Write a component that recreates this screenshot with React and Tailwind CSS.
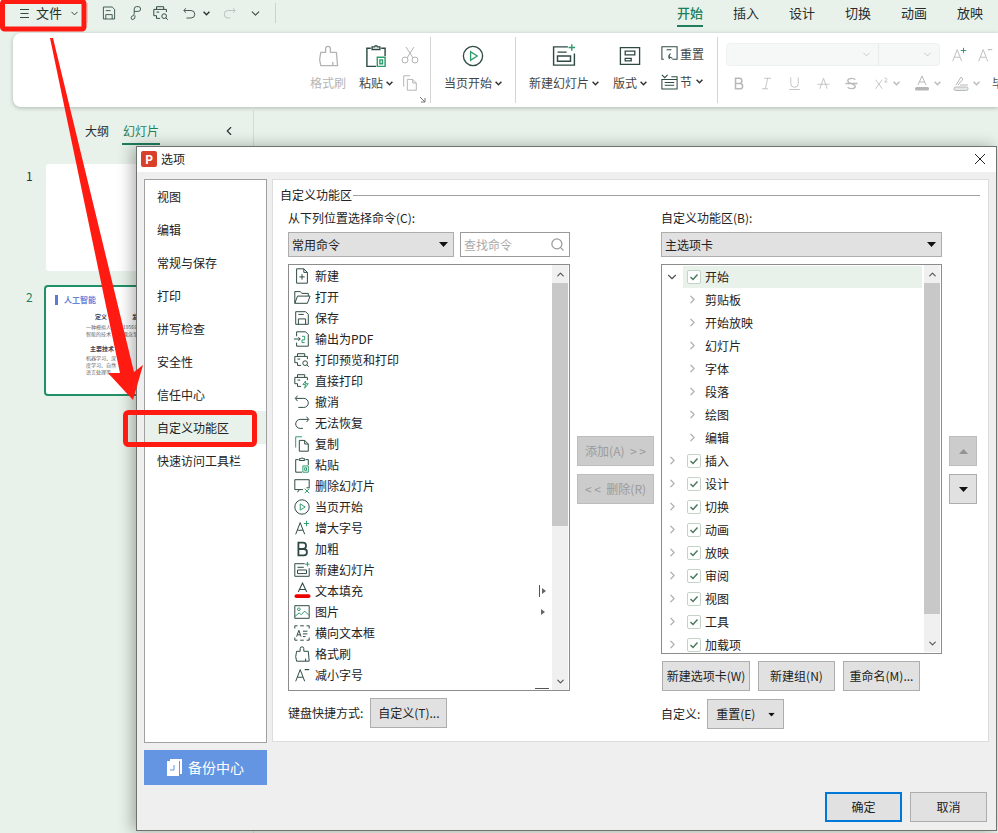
import React from 'react';
import { ChevronDown, ChevronRight, ChevronLeft, ChevronUp, Search } from 'lucide-react';

const FONT = "font-['Noto_Sans_CJK_SC','Noto_Sans',sans-serif]";
const DARK = '#2f4a44';
const GREEN = '#2e9b6d';
const GRAY = '#b4b4b4';

// plain outline icon, drawn on a 20 unit box
const Ico = ({ size = 20, color = DARK, children, className = '' }) => (
  <svg width={size} height={size} viewBox="0 0 20 20" fill="none" stroke={color} strokeWidth="1.1" className={`shrink-0 ${className}`}>
    {children}
  </svg>
);

const Caret = ({ className = '' }) => (
  <svg width="9" height="5" viewBox="0 0 9 5" className={`shrink-0 ${className}`}><path d="M0 0h9L4.5 5z" fill="#111" /></svg>
);

const MiniDown = ({ color = '#333' }) => (
  <svg width="7" height="5" viewBox="0 0 7 5" className="shrink-0" fill="none" stroke={color} strokeWidth="1.5"><path d="M.6.8l2.9 2.9L6.4.8" /></svg>
);

const icons = {
  new: <><path d="M4 2h8l4 4v12H4z" /><path d="M12 2v4h4M10 8v6M7 11h6" /></>,
  open: <><path d="M2 17V4h6l2 2h7v3" /><path d="M2 17l3-8h14l-3 8z" /></>,
  save: <><path d="M3 3h11l3 3v11H3z" /><path d="M6 17v-6h8v6M6 6h6" /></>,
  pdf: <><path d="M4 7V2h10l3 3v13H4v-4" /><path d="M1 10h7M6 8l2 2-2 2" /><path d="M10 7h3v4h-3v3h3" stroke={GREEN} /></>,
  preview: <><path d="M5 6V3h8v3M5 13H2V6h14v3" /><path d="M5 9h3M5 13v3h4" /><circle cx="13.5" cy="13.5" r="2.6" /><path d="M15.5 15.5l2 2" /></>,
  print: <><path d="M5 6V3h8v3M5 13H2V6h14v3" /><path d="M5 9h3M5 13v3h4" /><path d="M14 10l-3 4h3l-1 4 4-5h-3z" stroke={GREEN} /></>,
  undo: <><path d="M5 3L2.5 6 5 9" /><path d="M3 6h9a4.500 4.500 0 010 10H6" /></>,
  redo: <><path d="M15 3l2.500 3L15 9" /><path d="M17 6H8a5 5 0 000 10h3" /></>,
  copy: <><path d="M3 14V2h7" stroke={GREEN} /><path d="M7 6h6l4 4v8H7z" /><path d="M13 6v4h4" /></>,
  paste: <><path d="M6 4H3v14h7M14 4h3v6" /><path d="M7 5V3h2a1 1 0 012 0h2v2z" /><path d="M11 11h6v7h-6z" stroke={GREEN} /><path d="M13 13h2v3h-2z" stroke={GREEN} /></>,
  delSlide: <><path d="M2 3h16v9h-3M11 14H2V3" /><path d="M7 14l-2 3" /><path d="M13 13l5 5M18 13l-5 5" stroke={GREEN} /></>,
  play: <><circle cx="10" cy="10" r="8" /><path d="M8 6.500v7l5.500-3.500z" stroke={GREEN} /></>,
  grow: <><path d="M3 17L8 4l5 13M5 12.500h6" /><path d="M15 2v6M12 5h6" stroke={GREEN} /></>,
  bold: <path d="M6 3h5a3 3 0 010 7H6zM6 10h6a3.500 3.500 0 010 7H6z" strokeWidth="2" />,
  newSlide: <><path d="M13 3H2v14h16V8" /><path d="M5 7h7M5 10h10v4H5z" /><path d="M16 1v5M13.500 3.500h5" stroke={GREEN} /></>,
  pic: <><path d="M2 3h16v14H2z" /><circle cx="6.500" cy="7" r="1.500" stroke={GREEN} /><path d="M2 15l5-4 2 2 4-4 5 5" stroke={GREEN} /></>,
  textBox: <><path d="M2 5V2h3M15 2h3v3M2 15v3h3M15 18h3v-3M8 2h4M8 18h4" /><path d="M4 14l2.500-7L9 14M5 12h3M11 8h5M11 11h5M11 14h3" /></>,
  brush: <><path d="M8 7V4a2 2 0 014 0v3h5l1 11H4l-1-5 1-6z" /><path d="M14 18v-3" /></>,
  shrink: <><path d="M3 17L8 4l5 13M5 12.500h6" /><path d="M13 4h5" strokeWidth="1.300" /></>,
};

const commands = [
  ['new', '新建'], ['open', '打开'], ['save', '保存'], ['pdf', '输出为PDF'], ['preview', '打印预览和打印'],
  ['print', '直接打印'], ['undo', '撤消'], ['redo', '无法恢复'], ['copy', '复制'], ['paste', '粘贴'],
  ['delSlide', '删除幻灯片'], ['play', '当页开始'], ['grow', '增大字号'], ['bold', '加粗'], ['newSlide', '新建幻灯片'],
  ['fill', '文本填充'], ['pic', '图片'], ['textBox', '横向文本框'], ['brush', '格式刷'], ['shrink', '减小字号'],
];

const treeGroups = ['剪贴板', '开始放映', '幻灯片', '字体', '段落', '绘图', '编辑'];
const treeTabs = ['插入', '设计', '切换', '动画', '放映', '审阅', '视图', '工具', '加载项'];
const navItems = ['视图', '编辑', '常规与保存', '打印', '拼写检查', '安全性', '信任中心', '自定义功能区', '快速访问工具栏'];

const Btn = ({ w, children, disabled, primary }) => (
  <div className={`flex h-[30px] items-center justify-center whitespace-pre text-xs ${w} ${primary ? 'border-2 border-[#0078d7] bg-[#e1e1e1] text-[#222]' : disabled ? 'border border-[#bdbdbd] bg-[#cccccc] text-[#9b9b9b]' : 'border border-[#adadad] bg-[#e1e1e1] text-[#222]'}`}>
    {children}
  </div>
);

const Select = ({ w, label }) => (
  <div className={`flex h-[25px] items-center justify-between border border-[#adadad] bg-[#e1e1e1] pl-[3px] pr-[5px] text-xs text-[#222] ${w}`}>
    {label}
    <Caret />
  </div>
);

const Check = () => (
  <span className="flex h-[14px] w-[14px] shrink-0 items-center justify-center rounded-[2px] border border-[#c4d3c8] bg-white">
    <svg width="10" height="8" viewBox="0 0 10 8" fill="none" stroke="#4b7a5d" strokeWidth="1.500"><path d="M1.500 4l2.500 2.500L8.500 1.500" /></svg>
  </span>
);

const Scrollbar = ({ thumb }) => (
  <div className="flex w-4 shrink-0 flex-col bg-[#f0f0f0]">
    <div className="flex h-[18px] items-center justify-center"><ChevronUp size={11} strokeWidth={2.500} color="#555" /></div>
    <div className={`bg-[#c8c8c8] ${thumb}`} />
    <div className="flex-1" />
    <div className="flex h-[18px] items-center justify-center"><ChevronDown size={11} strokeWidth={2.500} color="#555" /></div>
  </div>
);

const TopBar = () => (
  <div className="flex h-[33px] items-start pt-[3px]">
    <div className="flex h-[20px] w-[88px] items-center border-r border-[#c9d2cb] pl-[19px] text-[13px] text-[#24302c]">
      <svg width="11" height="11" viewBox="0 0 11 11" stroke={DARK} strokeWidth="1.100"><path d="M1 1.500h9M1.500 5.500h8M1 9.500h9" /></svg>
      <span className="ml-[6px]">文件</span>
      <ChevronDown size={11} className="ml-[7px]" color="#333" />
    </div>
    <div className="ml-[13px] flex h-[20px] items-center">
      <Ico size={16}><path d="M3 2.500h11l3 3v12H3z" /><path d="M6 17.500V12h8v5.500M6 7h6" /></Ico>
      <Ico size={16} className="ml-[10px]"><path d="M9 8h5a3 3 0 000-6h-2a3 3 0 00-3 3v6a3 3 0 01-3 3 3 3 0 000 4h1a3 3 0 003-3v-2" /></Ico>
      <Ico size={18} className="ml-[9px]">{icons.preview}</Ico>
      <Ico size={15} className="ml-[12px]" color="#333">{icons.undo}</Ico>
      <span className="ml-[6px]"><MiniDown /></span>
      <Ico size={15} className="ml-[12px]" color={GRAY}>{icons.redo}</Ico>
      <ChevronDown size={13} className="ml-[12px]" color="#444" />
    </div>
    <div className="ml-[13px] h-[20px] w-px bg-[#c9d2cb]" />
    <div className="ml-auto mr-[15px] flex gap-[30px] text-[13px] text-[#2a2a2a]">
      <span className="border-b-2 border-[#1f7f5c] pb-[2px] font-medium leading-[20px] text-[#1f7f5c]">开始</span>
      {['插入', '设计', '切换', '动画', '放映'].map((t) => <span key={t} className="leading-[20px]">{t}</span>)}
    </div>
  </div>
);

const RibbonCol = ({ w, icon, label, disabled, caret }) => (
  <div className={`flex h-full shrink-0 flex-col items-center pt-[9px] ${w}`}>
    <div className="flex h-[28px] items-center">{icon}</div>
    <div className={`mt-[5px] flex items-center gap-[3px] whitespace-nowrap text-xs ${disabled ? 'text-[#b5b5b5]' : 'text-[#444]'}`}>
      {label}{caret && <MiniDown />}
    </div>
  </div>
);

const RibDiv = () => <div className="my-[4px] w-px shrink-0 bg-[#d5d5d5]" />;

const FmtGlyph = ({ children, w = 'w-[20px]', caret }) => (
  <div className={`flex items-center justify-center gap-[4px] ${w}`}>
    {children}
    {caret && <MiniDown color="#bbb" />}
  </div>
);

const Ribbon = () => (
  <div className="ml-[13px] flex h-[74px] rounded-l-[8px] bg-white pl-[296px] shadow-[0_1px_4px_rgba(0,0,0,0.25)]">
    <RibbonCol w="w-[38px]" disabled label="格式刷" icon={<Ico size={24} color={GRAY}>{icons.brush}</Ico>} />
    <RibbonCol w="w-[48px] ml-[5px]" label="粘贴" caret icon={<Ico size={26}>{icons.paste}</Ico>} />
    <div className="relative flex w-[30px] shrink-0 flex-col items-start gap-[10px] pl-[1px] pt-[13px]">
      <svg width="18" height="18" viewBox="0 0 18 18" fill="none" stroke={GRAY} strokeWidth="1"><circle cx="4" cy="14" r="3" /><circle cx="14" cy="14" r="3" /><path d="M6 12L13 1M12 12L5 1" /></svg>
      <Ico size={18} color={GRAY}><path d="M3 14V2h7" /><path d="M7 6h6l4 4v8H7z" /><path d="M13 6v4h4" /></Ico>
      <svg width="6" height="6" viewBox="0 0 6 6" className="absolute bottom-[4px] right-[4px]" stroke="#777" fill="none"><path d="M0 0l5 5M5 1v4H1" /></svg>
    </div>
    <RibDiv />
    <RibbonCol w="w-[84px]" label="当页开始" caret icon={<Ico size={24}>{icons.play}</Ico>} />
    <RibDiv />
    <RibbonCol w="w-[96px]" label="新建幻灯片" caret icon={<Ico size={26}>{icons.newSlide}</Ico>} />
    <RibbonCol w="w-[40px] ml-[-2px]" label="版式" caret icon={<Ico size={24}><path d="M2 3h16v14H2z" /><path d="M6 6h8v3H6zM6 12h5v2H6z" /></Ico>} />
    <div className="ml-[10px] flex w-[57px] shrink-0 flex-col gap-[9px] pt-[11px] text-xs text-[#444]">
      <div className="flex items-center gap-[1px]">
        <Ico size={19}><path d="M4 16H2V3h16v13h-5M7 6h5" /><path d="M13 15l-4-2M9 13l2-3M9 13l1 3" /></Ico>
        重置
      </div>
      <div className="flex items-center gap-[1px]">
        <Ico size={19}><path d="M2 3l3 3 3-3M12 5h6v13H2V8h16M5 11h10M5 14h10" /></Ico>
        节<span className="ml-[3px]"><MiniDown /></span>
      </div>
    </div>
    <RibDiv />
    <div className="ml-[8px] flex flex-1 flex-col pt-[10px]">
      <div className="flex items-center">
        <div className="flex h-[23px] w-[214px] rounded-[4px] border border-[#eef2ef] bg-[#f5f8f6]">
          <div className="flex w-[152px] items-center justify-end border-r border-[#e8ece9] pr-[6px]"><ChevronDown size={11} color="#c4c4c4" /></div>
          <div className="flex flex-1 items-center justify-end pr-[6px]"><ChevronDown size={11} color="#c4c4c4" /></div>
        </div>
        <Ico size={18} color="#c0c0c0" className="ml-[10px]">{icons.grow}</Ico>
        <Ico size={18} color="#c0c0c0" className="ml-[8px]">{icons.shrink}</Ico>
      </div>
      <div className="mt-[9px] flex items-center gap-[8px] pl-[2px]">
        <FmtGlyph><Ico size={15} color="#b8b8b8">{icons.bold}</Ico></FmtGlyph>
        <FmtGlyph><Ico size={15} color="#b8b8b8"><path d="M7 3h9M11.500 3l-3 14M4 17h8" /></Ico></FmtGlyph>
        <FmtGlyph w="w-[21px]"><Ico size={15} color="#b8b8b8"><path d="M5 2v8a5 5 0 0010 0V2M3 18h14" /></Ico></FmtGlyph>
        <FmtGlyph><Ico size={15} color="#b8b8b8"><path d="M5 17l5-14 5 14M2 11h16" /></Ico></FmtGlyph>
        <FmtGlyph><Ico size={15} color="#b8b8b8"><path d="M15 5c-1-2-9-3-10 1s10 4 10 8-9 3-10 1M2 10h16" strokeWidth="1.800" /></Ico></FmtGlyph>
        <FmtGlyph w="w-[36px]" caret><Ico size={15} color="#b8b8b8"><path d="M2 5l9 12M11 5l-9 12M14 3a2 2 0 013 2l-3 3h4" /></Ico></FmtGlyph>
        <FmtGlyph w="w-[29px]" caret>
          <svg width="16" height="16" viewBox="0 0 16 16" fill="none" stroke="#b8b8b8"><path d="M4 10L8 1l4 9M5.500 7h5" /><rect x="1" y="12" width="14" height="3.500" rx="1.500" fill="#b5b5b5" stroke="none" /></svg>
        </FmtGlyph>
        <FmtGlyph w="w-[32px]" caret>
          <svg width="16" height="16" viewBox="0 0 16 16" fill="none" stroke="#b8b8b8"><path d="M3 10L8 2l2 2-5 6M7 10h8" /><rect x="1" y="12" width="14" height="3.500" rx="1.500" fill="#e4ebe6" /></svg>
        </FmtGlyph>
        <span className="ml-[2px] text-xs text-[#555]">毕</span>
      </div>
    </div>
  </div>
);

const Sidebar = () => (
  <div className="h-[726px] w-[254px] border-r border-[#d3dcd5]">
    <div className="flex items-start pt-[15px] text-xs text-[#2a2a2a]">
      <span className="ml-[85px] leading-[18px]">大纲</span>
      <span className="ml-[13px] border-b-2 border-[#1f7f5c] px-[1px] pb-[3px] leading-[18px] text-[#1f7f5c]">幻灯片</span>
      <ChevronLeft size={14} className="ml-[62px] mt-[2px]" color="#333" />
    </div>
    <div className="mt-[19px] flex items-start">
      <span className="w-[46px] pl-[26px] pt-[3px] text-xs leading-[18px] text-[#333]">1</span>
      <div className="h-[107px] w-[190px] rounded-[3px] bg-white" />
    </div>
    <div className="mt-[14px] flex items-start">
      <span className="w-[44px] pl-[26px] pt-[3px] text-xs leading-[18px] text-[#1f7f5c]">2</span>
      <div className="h-[111px] w-[194px] rounded-[4px] border-2 border-[#219067] bg-white pl-[9px] pt-[8px]">
        <div className="flex items-center gap-[6px]">
          <span className="h-[10px] w-[3px] bg-[#5a7bd6]" />
          <span className="text-[8px] font-bold leading-[10px] text-[#6a85d8]">人工智能</span>
        </div>
        <div className="ml-[31px] mt-[8px] flex gap-[7px] text-[5px] leading-[7px] text-[#666]">
          <div className="flex flex-col items-start">
            <span className="ml-[9px] text-[6px] font-bold text-[#445]">定义</span>
            <span className="mt-[3px]">一种模拟人</span>
            <span>智能的技术</span>
            <span className="ml-[4px] mt-[8px] text-[6px] font-bold text-[#445]">主要技术</span>
            <span className="mt-[2px]">机器学习、深</span>
            <span>度学习、自然</span>
            <span>语言处理等</span>
          </div>
          <div className="flex flex-col items-start">
            <span className="ml-[9px] text-[6px] font-bold text-[#445]">发展</span>
            <span className="mt-[3px]">1956年提出</span>
            <span>概念至今</span>
          </div>
        </div>
      </div>
    </div>
  </div>
);

const Nav = () => (
  <div className="flex w-[123px] shrink-0 flex-col">
    <div className="h-[564px] border border-[#a0a0a0] bg-white">
      {navItems.map((item) => (
        <div key={item} className={`flex h-[33px] items-center pl-[12px] text-xs text-[#222] ${item === '自定义功能区' ? 'bg-[#e8f2ea]' : ''}`}>{item}</div>
      ))}
    </div>
    <div className="mt-[7px] flex h-[35px] items-center justify-center gap-[6px] bg-[#6495e2] text-[14px] text-white">
      <svg width="15" height="17" viewBox="0 0 15 17"><path d="M3 0h12v15h-2V2H3z" fill="#fff" /><rect x="0" y="2" width="12" height="15" fill="#fff" /><path d="M7 6v5H3" stroke="#6495e2" fill="none" /></svg>
      备份中心
    </div>
  </div>
);

const CommandList = () => (
  <div className="mt-[7px] flex h-[427px] w-[282px] border border-[#8c8c8c] bg-white pr-px">
    <div className="relative flex-1">
      {commands.map(([key, label]) => (
        <div key={key} className="relative flex h-[21px] items-center text-xs text-[#222]">
          <span className="flex w-[26px] justify-center">
            {key === 'fill' ? (
              <svg width="17" height="17" viewBox="0 0 16 16" fill="none" stroke={DARK}><path d="M4 9.500L8 1l4 8.500M5.500 7h5" /><rect x="0.500" y="11.500" width="15" height="3.500" rx="1.700" fill="#e00" stroke="none" /></svg>
            ) : (
              <Ico size={18}>{icons[key]}</Ico>
            )}
          </span>
          {label}
          {key === 'fill' && (
            <span className="absolute right-[6px] flex items-center gap-[2px]">
              <span className="h-[12px] w-px bg-[#555]" />
              <span className="h-0 w-0 border-y-[3px] border-l-[4px] border-y-transparent border-l-[#666]" />
            </span>
          )}
          {key === 'pic' && <span className="absolute right-[7px] h-0 w-0 border-y-[3px] border-l-[4px] border-y-transparent border-l-[#666]" />}
        </div>
      ))}
      <span className="absolute bottom-[1px] right-[3px] h-px w-[14px] bg-[#555]" />
    </div>
    <Scrollbar thumb="h-[243px]" />
  </div>
);

const Tree = () => (
  <div className="mt-[7px] flex h-[390px] w-[281px] border border-[#8c8c8c] bg-white pl-[4px]">
    <div className="min-w-0 flex-1 overflow-hidden">
      <div className="flex h-[23px] items-center">
        <ChevronDown size={14} strokeWidth={2} color="#555" className="-ml-[2px] w-[16px] shrink-0" />
        <div className="ml-[3px] flex h-[22px] flex-1 items-center gap-[4px] bg-[#e8f2ea] pl-[4px] text-xs text-[#222]"><Check />开始</div>
      </div>
      {treeGroups.map((g) => (
        <div key={g} className="flex h-[23px] items-center pl-[20px] text-xs text-[#222]">
          <ChevronRight size={13} strokeWidth={2.200} color="#b0b0b0" className="shrink-0" />
          <span className="ml-[6px]">{g}</span>
        </div>
      ))}
      {treeTabs.map((t) => (
        <div key={t} className="flex h-[23px] items-center text-xs text-[#222]">
          <ChevronRight size={13} strokeWidth={2.200} color="#b0b0b0" className="shrink-0" />
          <span className="ml-[8px] flex items-center gap-[4px]"><Check />{t}</span>
        </div>
      ))}
    </div>
    <div className="ml-[2px] flex pb-[1px] pr-[1px]"><Scrollbar thumb="h-[331px]" /></div>
  </div>
);

const Panel = () => (
  <div className="ml-[5px] h-[563px] flex-1 border border-[#dcdcdc] bg-white pl-[7px] pt-[6px]">
    <div className="flex items-center text-xs text-[#222]">
      <span className="leading-[18px]">自定义功能区</span>
      <span className="ml-[1px] mr-[8px] h-px flex-1 bg-[#a0a0a0]" />
    </div>
    <div className="mt-[5px] flex pl-[8px]">
      <div className="flex w-[282px] shrink-0 flex-col">
        <div className="text-xs leading-[18px] text-[#222]">从下列位置选择命令(C):</div>
        <div className="mt-[5px] flex gap-[6px]">
          <Select w="w-[166px]" label="常用命令" />
          <div className="flex h-[25px] flex-1 items-center justify-between border border-[#9a9a9a] bg-white pl-[3px] pr-[4px] text-xs text-[#aaa]">
            查找命令
            <Search size={15} color="#9a9a9a" />
          </div>
        </div>
        <CommandList />
        <div className="mt-[7px] flex items-center gap-[7px] text-xs text-[#222]">
          键盘快捷方式:
          <Btn w="w-[77px]">自定义(T)...</Btn>
        </div>
      </div>
      <div className="ml-[7px] flex w-[77px] shrink-0 flex-col gap-[8px] pt-[227px]">
        <Btn w="w-[77px]" disabled>{'添加(A)  > >'}</Btn>
        <Btn w="w-[77px]" disabled>{'< <  删除(R)'}</Btn>
      </div>
      <div className="ml-[7px] flex w-[281px] shrink-0 flex-col">
        <div className="text-xs leading-[18px] text-[#222]">自定义功能区(B):</div>
        <div className="mt-[5px]"><Select w="w-[281px]" label="主选项卡" /></div>
        <Tree />
        <div className="mt-[7px] flex gap-[8px] pl-[1px]">
          <Btn w="w-[88px]">新建选项卡(W)</Btn>
          <Btn w="w-[77px]">新建组(N)</Btn>
          <Btn w="w-[77px]">重命名(M)...</Btn>
        </div>
        <div className="mt-[8px] flex items-center text-xs text-[#222]">
          自定义:
          <div className="ml-[7px] flex h-[30px] w-[77px] items-center justify-end gap-[12px] border border-[#adadad] bg-[#e1e1e1] pr-[7px]">
            重置(E)<Caret className="scale-75" />
          </div>
        </div>
      </div>
      <div className="ml-[7px] flex flex-col gap-[8px] pt-[227px]">
        <div className="flex h-[30px] w-[28px] items-center justify-center border border-[#bdbdbd] bg-[#cccccc]"><Caret className="rotate-180 opacity-30" /></div>
        <div className="flex h-[30px] w-[28px] items-center justify-center border border-[#adadad] bg-[#e1e1e1]"><Caret /></div>
      </div>
    </div>
  </div>
);

const Dialog = () => (
  <div className="absolute left-[136px] top-[146px] flex h-[685px] w-[861px] flex-col border border-[#6f7370] bg-[#efefef] shadow-[-4px_0_14px_rgba(0,0,0,0.3)]">
    <div className="flex h-[25px] shrink-0 items-center bg-white pb-[2px] pl-[4px] pr-[3px] text-xs text-[#222]">
      <span className="flex h-[16px] w-[16px] items-center justify-center rounded-[2px] bg-[#d9402b] text-[12px] font-bold leading-none text-white">P</span>
      <span className="ml-[4px]">选项</span>
      <svg width="12" height="12" viewBox="0 0 12 12" stroke="#222" className="ml-auto mr-[7px]"><path d="M1 1l10 10M11 1L1 11" /></svg>
    </div>
    <div className="flex px-[7px] pt-[7px]">
      <Nav />
      <Panel />
    </div>
    <div className="mt-auto flex justify-end gap-[8px] pb-[8px] pr-[9px] pt-0">
      <Btn w="w-[77px]" primary>确定</Btn>
      <Btn w="w-[77px]">取消</Btn>
    </div>
  </div>
);

export default function App() {
  return (
    <div className={`relative h-[833px] w-[998px] overflow-hidden bg-[#e8f2ea] ${FONT}`}>
      <TopBar />
      <Ribbon />
      <Sidebar />
      <Dialog />
      {/* red marks someone drew over the screenshot */}
      <svg width="998" height="833" className="pointer-events-none absolute left-0 top-0" fill="none">
        <rect x="2.500" y="1.500" width="81.500" height="27.500" rx="2" stroke="#ff1a12" strokeWidth="5" />
        <rect x="125.500" y="412.500" width="129" height="32" rx="3" stroke="#ff1a12" strokeWidth="5" />
        <path d="M50 38L53 38L134 372L143 365L133 400L108 373L120 373Z" fill="#ff1a12" />
      </svg>
    </div>
  );
}
